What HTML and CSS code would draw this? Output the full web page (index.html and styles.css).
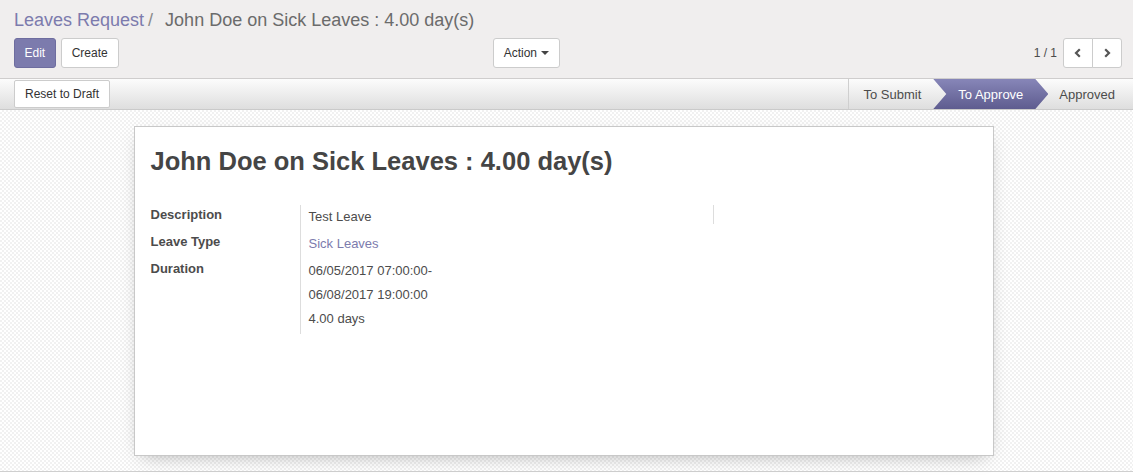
FILE: index.html
```html
<!DOCTYPE html>
<html>
<head>
<meta charset="utf-8">
<link rel="stylesheet" href="styles.css">
</head>
<body>
<div class="cp">
  <ol class="breadcrumb">
    <li class="crumb"><a class="crumb-link">Leaves Request</a></li>
    <li class="crumb active">John Doe on Sick Leaves : 4.00 day(s)</li>
  </ol>
  <div class="cp-row">
    <div class="cp-left">
      <div class="cp-buttons">
        <button class="btn btn-primary">Edit</button>
        <button class="btn">Create</button>
      </div>
      <div class="cp-sidebar">
        <button class="btn">Action <span class="caret"></span></button>
      </div>
    </div>
    <div class="cp-right">
      <div class="pager">
        <span class="pager-value">1 / 1</span>
        <div class="btn-group">
          <button class="btn pager-btn first"><svg width="10" height="10" viewBox="0 0 10 10"><path d="M6.8 1.2 L3 5 L6.8 8.8" fill="none" stroke="#555" stroke-width="2.2"/></svg></button>
          <button class="btn pager-btn last"><svg width="10" height="10" viewBox="0 0 10 10"><path d="M3.2 1.2 L7 5 L3.2 8.8" fill="none" stroke="#555" stroke-width="2.2"/></svg></button>
        </div>
      </div>
    </div>
  </div>
</div>

<div class="statusbar">
  <div class="sb-buttons">
    <button class="btn btn-sb">Reset to Draft</button>
  </div>
  <div class="sb-status">
    <span class="sb-step first">To Submit</span>
    <span class="sb-step current">To Approve</span>
    <span class="sb-step last">Approved</span>
  </div>
</div>

<div class="sheet-bg">
  <div class="sheet">
    <h1 class="title">John Doe on Sick Leaves : 4.00 day(s)</h1>
    <div class="groups">
      <div class="group">
        <div class="row">
          <div class="label">Description</div>
          <div class="value">Test Leave</div>
        </div>
        <div class="row">
          <div class="label">Leave Type</div>
          <div class="value"><a class="link">Sick Leaves</a></div>
        </div>
        <div class="row">
          <div class="label">Duration</div>
          <div class="value">
            <div class="vline">06/05/2017 07:00:00-</div>
            <div class="vline">06/08/2017 19:00:00</div>
            <div class="vline">4.00 days</div>
          </div>
        </div>
      </div>
      <div class="group">
        <div class="row">
          <div class="label empty"></div>
          <div class="value"></div>
        </div>
      </div>
    </div>
  </div>
</div>
</body>
</html>
```

FILE: styles.css
```css
* { box-sizing: border-box; }
html, body { margin: 0; padding: 0; }
body {
  font-family: "Liberation Sans", Arial, Helvetica, sans-serif;
  font-size: 13px;
  color: #4c4c4c;
  background: #fff;
  width: 1133px;
  height: 475px;
  overflow: hidden;
}

/* control panel */
.cp {
  background: #f0eeee;
  border-bottom: 1px solid #cfcdcd;
  padding: 8px 11px 10px 14px;
  height: 79px;
}
.breadcrumb {
  list-style: none;
  margin: 0;
  padding: 0;
  display: flex;
  font-size: 18px;
  line-height: 25px;
  height: 25px;
}
.crumb-link { color: #7c7bad; }
.crumb.active { color: #6b6b6b; }
.crumb.active::before {
  content: "/";
  color: #8a8a8a;
  padding: 0 12px 0 4px;
}
.cp-row {
  display: flex;
  margin-top: 5px;
}
.cp-left {
  width: 554px;
  display: flex;
  justify-content: space-between;
  padding-right: 8px;
}
.cp-buttons { display: flex; gap: 5px; }
.cp-right {
  flex: 1;
  display: flex;
  justify-content: flex-end;
}
.btn {
  font-family: inherit;
  font-size: 12px;
  line-height: 18px;
  padding: 5px 10px;
  height: 30px;
  border: 1px solid #cccccc;
  border-radius: 3px;
  background: #fff;
  color: #333;
  cursor: pointer;
  display: inline-flex;
  align-items: center;
}
.btn-primary {
  background: #7c7bad;
  border-color: #6e6d9f;
  color: #fff;
  padding: 5px 9.5px;
}
.caret {
  display: inline-block;
  width: 0;
  height: 0;
  margin-left: 4px;
  border-top: 4px solid #444;
  border-left: 4px solid transparent;
  border-right: 4px solid transparent;
}
.pager { display: flex; align-items: center; }
.pager-value {
  font-size: 12px;
  color: #4c4c4c;
  margin-right: 6px;
}
.btn-group { display: flex; }
.pager-btn {
  width: 30px;
  justify-content: center;
  padding: 0;
}
.pager-btn.first { border-radius: 3px 0 0 3px; }
.pager-btn.last { border-radius: 0 3px 3px 0; margin-left: -1px; }

/* status bar */
.statusbar {
  display: flex;
  justify-content: space-between;
  align-items: center;
  height: 31px;
  padding-left: 14px;
  background-image: linear-gradient(to bottom, #fcfcfc, #dedede);
  border-bottom: 1px solid #cacaca;
}
.btn-sb {
  height: 28px;
  padding: 4px 10px;
  border-radius: 2px;
}
.sb-status {
  display: flex;
  height: 30px;
  align-self: flex-start;
  margin-right: 8px;
}
.sb-step {
  display: flex;
  align-items: center;
  height: 30px;
  font-size: 13px;
  color: #4c4c4c;
  position: relative;
}
.sb-step.first {
  border-left: 1px solid #cfcfcf;
  padding: 0 25px 0 14px;
}
.sb-step.current {
  z-index: 2;
  margin-left: -13px;
  padding: 0 25px 0 25px;
  color: #fff;
  background-image: linear-gradient(to bottom, #8786b8, #5e5c8f);
  clip-path: polygon(0 0, calc(100% - 13px) 0, 100% 50%, calc(100% - 13px) 100%, 0 100%, 13px 50%);
}
.sb-step.last {
  margin-left: -13px;
  padding: 0 10px 0 24px;
}

/* sheet */
.sheet-bg {
  height: 362px;
  padding: 16px 6px 0 0;
  background-color: #fff;
  background-image: repeating-conic-gradient(#f1f1f1 0 25%, #ffffff 0 50%);
  background-size: 4px 4px;
  border-bottom: 1px solid #cfcfcf;
}
.sheet {
  width: 860px;
  height: 330px;
  margin: 0 auto;
  background: #fff;
  border: 1px solid #c8c8c8;
  box-shadow: 0 6px 18px -8px rgba(0, 0, 0, 0.35);
  padding: 16px 16px 16px 16px;
}
.title {
  margin: 0;
  font-size: 25.5px;
  line-height: 36px;
  font-weight: bold;
  color: #454545;
}
.groups {
  display: grid;
  grid-template-columns: 1fr 1fr;
  margin-top: 26px;
}
.row {
  display: flex;
}
.label {
  width: 150px;
  flex: none;
  border-right: 1px solid #dddddd;
  padding: 1px 0 8px 0;
  line-height: 18px;
  font-weight: bold;
  color: #4c4c4c;
}
.label.empty {
  height: 19px;
  padding: 0;
}
.value {
  padding: 3px 0 6px 8px;
  line-height: 18px;
  color: #4c4c4c;
}
.vline + .vline { margin-top: 6px; }
.link { color: #7c7bad; }
```
